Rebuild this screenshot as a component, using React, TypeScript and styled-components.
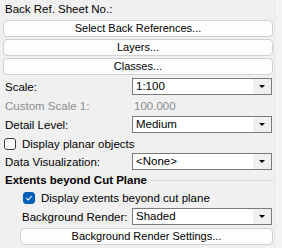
import React from "react";
import styled, { createGlobalStyle } from "styled-components";

const GlobalStyles = createGlobalStyle`
  html, body {
    margin: 0;
    padding: 0;
    background: #f0f0f0;
  }
  body {
    font-family: "Liberation Sans", Arial, sans-serif;
    font-size: 11.5px;
    color: #000;
  }
`;

const Frame = styled.div`
  display: flex;
  width: 282px;
  height: 248px;
  overflow: hidden;
  background: #f0f0f0;
`;

const Panel = styled.div`
  display: flex;
  flex-direction: column;
  width: 274px;
  padding: 0 1px 0 3px;
  box-sizing: border-box;
`;

const ScrollStrip = styled.div`
  flex: 1;
  border-left: 1px solid #e6e6e6;
  background: #f3f3f3;
`;

const Label = styled.div<{ $muted?: boolean; $indent?: number }>`
  height: 17px;
  line-height: 17px;
  padding-left: ${(p) => 2 + (p.$indent || 0)}px;
  color: ${(p) => (p.$muted ? "#8d8d8d" : "#000")};
  white-space: nowrap;
`;

const Button = styled.button<{ $indent?: number; $top?: number }>`
  display: block;
  height: 17px;
  margin: ${(p) => p.$top ?? 2}px 0 0 ${(p) => p.$indent || 0}px;
  padding: 0;
  border: 1px solid #d0d0d0;
  border-radius: 4px;
  background: #fdfdfd;
  font-family: "Liberation Sans", Arial, sans-serif;
  font-size: 11px;
  line-height: 15px;
  color: #000;
  text-align: center;
`;

const Row = styled.div<{ $indent?: number; $top?: number }>`
  display: grid;
  grid-template-columns: ${(p) => 129 - (p.$indent || 0)}px 140px;
  align-items: center;
  height: 17px;
  margin-top: ${(p) => p.$top ?? 2}px;
  padding-left: ${(p) => p.$indent || 0}px;
`;

const RowLabel = styled.span<{ $muted?: boolean }>`
  padding-left: 2px;
  white-space: nowrap;
  color: ${(p) => (p.$muted ? "#8d8d8d" : "#000")};
`;

const Select = styled.div`
  display: flex;
  height: 17px;
  box-sizing: border-box;
  border: 1px solid #7a7a7a;
  background: #fff;
`;

const SelectValue = styled.span`
  flex: 1;
  padding-left: 3px;
  line-height: 15px;
  white-space: nowrap;
`;

const SelectArrow = styled.span`
  display: flex;
  align-items: center;
  justify-content: center;
  width: 18px;
  background: #f0f0f0;
`;

const Arrow = styled.span`
  width: 0;
  height: 0;
  border-left: 3px solid transparent;
  border-right: 3px solid transparent;
  border-top: 3px solid #000;
`;

const MutedValue = styled.span`
  padding-left: 2px;
  color: #8d8d8d;
`;

const CheckRow = styled.label<{ $indent?: number; $top?: number }>`
  display: flex;
  align-items: center;
  gap: 6px;
  height: 17px;
  margin-top: ${(p) => p.$top ?? 2}px;
  padding-left: ${(p) => 1 + (p.$indent || 0)}px;
  white-space: nowrap;
`;

const Box = styled.span<{ $checked?: boolean }>`
  display: flex;
  align-items: center;
  justify-content: center;
  width: 12px;
  height: 12px;
  box-sizing: border-box;
  border-radius: 3px;
  border: 1px solid ${(p) => (p.$checked ? "#005fb8" : "#3c3c3c")};
  background: ${(p) => (p.$checked ? "#005fb8" : "#fff")};
`;

const Heading = styled.div`
  display: flex;
  align-items: center;
  gap: 4px;
  height: 17px;
  margin-top: 1px;
  padding-left: 2px;
  font-size: 11.5px;
  font-weight: bold;
  white-space: nowrap;
`;

const HeadingLine = styled.span`
  flex: 1;
  height: 0;
  border-top: 1px solid #dcdcdc;
  margin-top: 1px;
`;

function Dropdown({ value }: { value: string }): JSX.Element {
  return (
    <Select>
      <SelectValue>{value}</SelectValue>
      <SelectArrow>
        <Arrow />
      </SelectArrow>
    </Select>
  );
}

function Check({ checked }: { checked?: boolean }): JSX.Element {
  return (
    <Box $checked={checked}>
      {checked && (
        <svg width="8" height="8" viewBox="0 0 8 8">
          <path d="M1.3 4.2 L3.2 6 L6.8 2" fill="none" stroke="#fff" strokeWidth="1.1" />
        </svg>
      )}
    </Box>
  );
}

function App(): JSX.Element {
  return (
    <React.Fragment>
      <GlobalStyles />
      <Frame>
        <Panel>
          <Label style={{ marginTop: 1 }}>Back Ref. Sheet No.:</Label>
          <Button>Select Back References...</Button>
          <Button>Layers...</Button>
          <Button>Classes...</Button>

          <Row $top={3}>
            <RowLabel>Scale:</RowLabel>
            <Dropdown value="1:100" />
          </Row>
          <Row>
            <RowLabel $muted>Custom Scale 1:</RowLabel>
            <MutedValue>100.000</MutedValue>
          </Row>
          <Row>
            <RowLabel>Detail Level:</RowLabel>
            <Dropdown value="Medium" />
          </Row>
          <CheckRow>
            <Check />
            Display planar objects
          </CheckRow>
          <Row $top={1}>
            <RowLabel>Data Visualization:</RowLabel>
            <Dropdown value="<None>" />
          </Row>

          <Heading>
            Extents beyond Cut Plane
            <HeadingLine />
          </Heading>
          <CheckRow $indent={19} $top={1}>
            <Check checked />
            Display extents beyond cut plane
          </CheckRow>
          <Row $indent={17}>
            <RowLabel>Background Render:</RowLabel>
            <Dropdown value="Shaded" />
          </Row>
          <Button $indent={17} $top={3}>
            Background Render Settings...
          </Button>
        </Panel>
        <ScrollStrip />
      </Frame>
    </React.Fragment>
  );
}

export default App;
